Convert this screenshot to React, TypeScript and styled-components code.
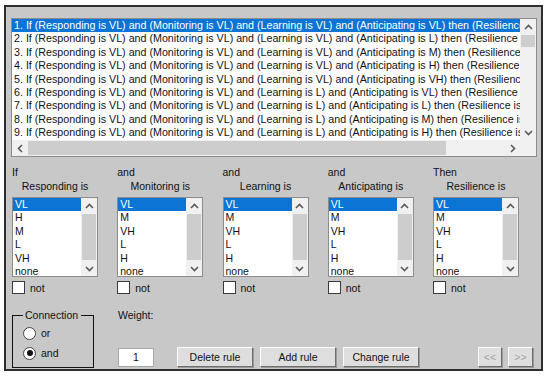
import styled, { createGlobalStyle } from 'styled-components';

const GlobalStyle = createGlobalStyle`
  body {
    margin: 0;
    background: #fff;
    font-family: "Liberation Sans", Arial, sans-serif;
  }
`;

const Frame = styled.div`
  box-sizing: border-box;
  width: 539px;
  height: 366px;
  margin: 5px 0 0 4px;
  padding: 11px 4px 0 5px;
  border: 2px solid #2e2e2e;
  background: #c8c8c8;
  font-size: 10.5px;
  color: #111;
  display: flex;
  flex-direction: column;
`;

const ListBox = styled.div<{ $w: number; $h: number; $hscroll?: boolean }>`
  box-sizing: border-box;
  width: ${(p) => p.$w}px;
  height: ${(p) => p.$h}px;
  border: 1px solid #8c8c8c;
  background: #fff;
  display: grid;
  grid-template-columns: 1fr 16px;
  grid-template-rows: ${(p) => (p.$hscroll ? '1fr 16px' : '1fr')};
  font-size: ${(p) => (p.$hscroll ? '10.7px' : '10.5px')};
  overflow: hidden;
`;

const Rows = styled.div`
  overflow: hidden;
  min-width: 0;
`;

const Row = styled.div<{ $selected?: boolean }>`
  height: 13.4px;
  line-height: 13.4px;
  padding-left: 2px;
  white-space: nowrap;
  overflow: hidden;
  text-overflow: clip;
  background: ${(p) => (p.$selected ? '#0b74d4' : 'transparent')};
  color: ${(p) => (p.$selected ? '#fff' : '#111')};
`;

const VScroll = styled.div`
  display: flex;
  flex-direction: column;
  background: #f0f0f0;
`;

const HScroll = styled.div`
  display: flex;
  background: #f0f0f0;
`;

const Corner = styled.div`
  background: #f0f0f0;
`;

const ArrowCell = styled.div`
  flex: none;
  width: 16px;
  height: 16px;
  display: flex;
  align-items: center;
  justify-content: center;
`;

const Thumb = styled.div<{ $size?: number; $vertical?: boolean }>`
  background: #cdcdcd;
  ${(p) =>
    p.$vertical
      ? `margin: 0 1px; ${p.$size ? `height: ${p.$size}px; flex: none;` : 'flex: 1;'}`
      : `margin: 1px 0; ${p.$size ? `width: ${p.$size}px; flex: none;` : 'flex: 1;'}`}
`;

const Spacer = styled.div`
  flex: 1;
`;

const Columns = styled.div`
  display: grid;
  grid-template-columns: repeat(5, 86px);
  column-gap: 19.25px;
  margin: 8px 0 0 1px;
`;

const Column = styled.div`
  display: flex;
  flex-direction: column;
`;

const Lead = styled.div`
  line-height: 14px;
  height: 14px;
`;

const Title = styled.div`
  line-height: 14px;
  height: 14px;
  text-align: center;
  margin-bottom: 4px;
  white-space: nowrap;
`;

const CheckRow = styled.label`
  display: flex;
  align-items: center;
  gap: 5px;
  margin-top: 4px;
  height: 13px;
`;

const Box = styled.span`
  box-sizing: border-box;
  width: 13px;
  height: 13px;
  background: #fff;
  border: 1px solid #3a3a3a;
`;

const Bottom = styled.div`
  display: flex;
  align-items: flex-end;
  margin: 14px 0 0 1px;
`;

const Group = styled.fieldset`
  box-sizing: border-box;
  width: 82px;
  height: 60px;
  margin: 0;
  padding: 0 0 7px 10px;
  border: 1px solid #111;
  display: flex;
  flex-direction: column;
  gap: 6px;
`;

const Legend = styled.legend`
  padding: 0 3px 0 2px;
  line-height: 14px;
`;

const RadioRow = styled.label`
  display: flex;
  align-items: center;
  gap: 5px;
  height: 14px;
  &:first-of-type {
    margin-top: 4px;
  }
`;

const Radio = styled.span<{ $checked?: boolean }>`
  box-sizing: border-box;
  width: 13px;
  height: 13px;
  border-radius: 50%;
  background: #fff;
  border: 1px solid #444;
  display: flex;
  align-items: center;
  justify-content: center;

  &::after {
    content: '';
    display: ${(p) => (p.$checked ? 'block' : 'none')};
    width: 6px;
    height: 6px;
    border-radius: 50%;
    background: #111;
  }
`;

const WeightBox = styled.div`
  align-self: stretch;
  display: flex;
  flex-direction: column;
  justify-content: space-between;
  width: 36px;
  margin: 0 23px 1px 24px;
`;

const WeightLabel = styled.div`
  line-height: 14px;
`;

const WeightInput = styled.div`
  box-sizing: border-box;
  height: 19px;
  background: #fff;
  border: 1px solid #a8a8a8;
  text-align: center;
  line-height: 17px;
`;

const Buttons = styled.div`
  display: flex;
  gap: 7px;
  margin-bottom: 1px;
`;

const Button = styled.button<{ $w?: number; $disabled?: boolean }>`
  box-sizing: border-box;
  width: ${(p) => p.$w ?? 76}px;
  height: 20px;
  padding: 0;
  font: inherit;
  color: ${(p) => (p.$disabled ? '#a4a4a4' : '#111')};
  background: #dedede;
  border: 1px solid;
  border-color: #fbfbfb #6e6e6e #6e6e6e #fbfbfb;
  box-shadow: 1px 1px 0 #9a9a9a;
`;

const Nav = styled.div`
  display: flex;
  gap: 6px;
  margin: 0 4px 1px auto;
`;

function Chevron({ dir }: { dir: 'up' | 'down' | 'left' | 'right' }) {
  const pts = {
    up: '1,5 4.5,1.5 8,5',
    down: '1,2 4.5,5.5 8,2',
    left: '5.5,1 2,4.5 5.5,8',
    right: '2.5,1 6,4.5 2.5,8',
  }[dir];
  const vertical = dir === 'up' || dir === 'down';
  return (
    <svg width="9" height={vertical ? 7 : 9} viewBox={vertical ? '0 0 9 7' : '0 0 8 9'}>
      <polyline points={pts} fill="none" stroke="#5a5a5a" strokeWidth="1.6" />
    </svg>
  );
}

const levels = ['VL', 'L', 'M', 'H', 'VH'];
const rules = Array.from({ length: 9 }, (_, i) => {
  const learning = i < 5 ? 'VL' : 'L';
  const anticipating = levels[i % 5];
  return `${i + 1}. If (Responding is VL) and (Monitoring is VL) and (Learning is ${learning}) and (Anticipating is ${anticipating}) then (Resilience is VL) (1)`;
});

const columns = [
  { lead: 'If', title: 'Responding is', items: ['VL', 'H', 'M', 'L', 'VH', 'none'] },
  { lead: 'and', title: 'Monitoring is', items: ['VL', 'M', 'VH', 'L', 'H', 'none'] },
  { lead: 'and', title: 'Learning is', items: ['VL', 'M', 'VH', 'L', 'H', 'none'] },
  { lead: 'and', title: 'Anticipating is', items: ['VL', 'M', 'VH', 'L', 'H', 'none'] },
  { lead: 'Then', title: 'Resilience is', items: ['VL', 'M', 'VH', 'L', 'H', 'none'] },
];

export default function App() {
  return (
    <>
      <GlobalStyle />
      <Frame>
        <ListBox $w={526} $h={139} $hscroll>
          <Rows>
            {rules.map((r, i) => (
              <Row key={r} $selected={i === 0}>
                {r}
              </Row>
            ))}
          </Rows>
          <VScroll>
            <ArrowCell>
              <Chevron dir="up" />
            </ArrowCell>
            <Thumb $vertical $size={12} />
            <Spacer />
            <ArrowCell>
              <Chevron dir="down" />
            </ArrowCell>
          </VScroll>
          <HScroll>
            <ArrowCell>
              <Chevron dir="left" />
            </ArrowCell>
            <Thumb $size={418} />
            <Spacer />
            <ArrowCell>
              <Chevron dir="right" />
            </ArrowCell>
          </HScroll>
          <Corner />
        </ListBox>

        <Columns>
          {columns.map((c) => (
            <Column key={c.title}>
              <Lead>{c.lead}</Lead>
              <Title>{c.title}</Title>
              <ListBox $w={86} $h={80}>
                <Rows>
                  {c.items.map((it, i) => (
                    <Row key={it} $selected={i === 0}>
                      {it}
                    </Row>
                  ))}
                </Rows>
                <VScroll>
                  <ArrowCell>
                    <Chevron dir="up" />
                  </ArrowCell>
                  <Thumb $vertical />
                  <ArrowCell>
                    <Chevron dir="down" />
                  </ArrowCell>
                </VScroll>
              </ListBox>
              <CheckRow>
                <Box />
                not
              </CheckRow>
            </Column>
          ))}
        </Columns>

        <Bottom>
          <Group>
            <Legend>Connection</Legend>
            <RadioRow>
              <Radio />
              or
            </RadioRow>
            <RadioRow>
              <Radio $checked />
              and
            </RadioRow>
          </Group>
          <WeightBox>
            <WeightLabel>Weight:</WeightLabel>
            <WeightInput>1</WeightInput>
          </WeightBox>
          <Buttons>
            <Button>Delete rule</Button>
            <Button>Add rule</Button>
            <Button>Change rule</Button>
          </Buttons>
          <Nav>
            <Button $w={24} $disabled>
              &lt;&lt;
            </Button>
            <Button $w={25} $disabled>
              &gt;&gt;
            </Button>
          </Nav>
        </Bottom>
      </Frame>
    </>
  );
}
